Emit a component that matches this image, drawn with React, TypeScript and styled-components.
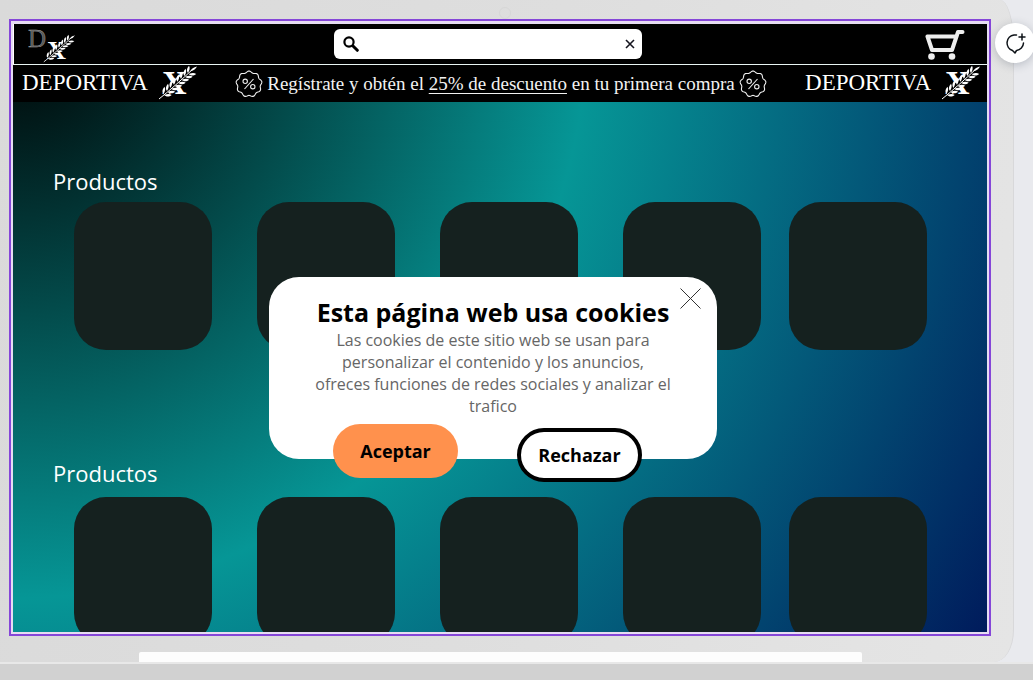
import React from "react";
import styled, { createGlobalStyle } from "styled-components";

const GlobalStyle = createGlobalStyle`
  * { box-sizing: border-box; }
  body {
    margin: 0;
    background: #e9eaee;
    font-family: "Open Sans", "Noto Sans", sans-serif;
  }
`;

const Page = styled.div`
  position: relative;
  display: flex;
  flex-direction: column;
  height: 100vh;
  min-height: 520px;
  overflow: hidden;
`;

const Lid = styled.div`
  position: relative;
  flex: 1;
  min-height: 0;
  display: flex;
  flex-direction: column;
  margin-right: 19px;
  padding: 19px 22px 0 9px;
  border-right: 1px solid #d8d8da;
  border-radius: 0 14px 20px 0 / 0 44px 32px 0;
  background: linear-gradient(100deg, #dadada, #dedede 50%, #e5e5e5);
`;

const Camera = styled.span`
  position: absolute;
  top: 7px;
  left: 50%;
  width: 12px;
  height: 12px;
  margin-left: -8px;
  border: 1px solid #d7d7d7;
  border-radius: 50%;
`;

const Base = styled.div`
  height: 18px;
  flex: none;
  border-top: 2px solid #e8e8e8;
  background: #d1d1d1;
`;

const Notch = styled.div`
  flex: none;
  height: 10px;
  margin: 16px 129px 0 130px;
  border-radius: 2px 2px 0 0;
  background: #fdfdfd;
`;

const Selection = styled.div`
  position: relative;
  flex: 1;
  min-height: 0;
  display: flex;
  padding: 3px 2px 2px;
  border: 2px solid #8546d8;
  background: #e6dcf2;
`;

const Screen = styled.main`
  position: relative;
  flex: 1;
  min-width: 0;
  display: flex;
  flex-direction: column;
  overflow: hidden;
  background: radial-gradient(circle at 0 0, #000 0%, #069696 50%, #001b5c 100%);
`;

const TopBar = styled.header`
  flex: none;
  display: grid;
  grid-template-columns: 1fr 308px 1fr;
  align-items: center;
  height: 41px;
  padding: 0 22px 0 14px;
  border-left: 1px solid #fff;
  border-bottom: 1px solid #e8f4f2;
  background: #000;
`;

const Brand = styled.a`
  display: block;
  height: 40px;
  svg { display: block; }
`;

const SearchBox = styled.div`
  display: flex;
  align-items: center;
  height: 30px;
  margin: 0 9px 0 -9px;
  padding: 0 6px 0 9px;
  border-radius: 6px;
  background: #fff;
`;

const SearchInput = styled.input`
  flex: 1;
  min-width: 0;
  height: 28px;
  padding: 0 8px;
  border: 0;
  outline: 0;
  background: transparent;
  font: 14px "Open Sans", sans-serif;
`;

const IconButton = styled.button`
  display: flex;
  align-items: center;
  justify-content: center;
  padding: 0;
  border: 0;
  background: transparent;
  color: #000;
  cursor: pointer;
`;

const CartButton = styled(IconButton)`
  justify-self: end;
`;

const PromoBar = styled.div`
  flex: none;
  display: flex;
  align-items: center;
  justify-content: space-between;
  height: 37px;
  padding: 0 7px 0 9px;
  background: #000;
  color: #fff;
  font-family: "Liberation Serif", serif;
`;

const Wordmark = styled.div`
  display: flex;
  align-items: center;
  gap: 10px;
  padding-bottom: 2px;
  font-size: 23px;
  line-height: 32px;
  svg { display: block; overflow: visible; }
`;

const Promo = styled.p`
  display: flex;
  align-items: center;
  gap: 4px;
  margin: 0;
  font-size: 19px;
  line-height: 24px;
  white-space: nowrap;
  color: #f2f2f2;
  a { color: inherit; text-underline-offset: 3px; text-decoration-thickness: 1px; }
`;

const Shelf = styled.section`
  flex: none;
  padding: 0 60px 0 61px;
`;

const Catalog = styled.div`
  flex: 1;
  min-height: 0;
  display: flex;
  flex-direction: column;
  gap: 107px;
  padding-top: 63px;
`;

const ShelfTitle = styled.h2<{ $gap: number }>`
  margin: 0 0 ${(p) => p.$gap}px -21px;
  font-size: 22px;
  font-weight: 400;
  line-height: 32px;
  color: #fff;
`;

const Cards = styled.div`
  display: flex;
  gap: 45px;
`;

const Card = styled.article`
  flex: 1;
  height: 148px;
  border-radius: 32px;
  background: #15211f;
  &:last-child { margin-left: -17px; }
`;

const Overlay = styled.div`
  position: absolute;
  inset: 0;
  display: flex;
  justify-content: center;
  align-items: flex-start;
  padding: 253px 14px 0 0;
`;

const Dialog = styled.section`
  position: relative;
  width: 448px;
  height: 182px;
  padding: 19px 44px 0;
  border-radius: 30px;
  background: #fff;
  text-align: center;
`;

const CloseButton = styled(IconButton)`
  position: absolute;
  top: 11px;
  right: 16px;
`;

const DialogTitle = styled.h1`
  margin: 0;
  font-size: 25px;
  line-height: 33px;
  white-space: nowrap;
  color: #000;
`;

const DialogText = styled.p`
  margin: 0 0 7px;
  font-size: 16px;
  line-height: 22px;
  color: #666;
`;

const Actions = styled.div`
  display: flex;
  align-items: flex-start;
  gap: 59px;
  margin-left: 20px;
`;

const Choice = styled.button<{ $outlined?: boolean }>`
  flex: none;
  width: 125px;
  height: 54px;
  margin-top: ${(p) => (p.$outlined ? 4 : 0)}px;
  padding: 0;
  border: ${(p) => (p.$outlined ? "4px solid #000" : "0")};
  border-radius: 27px;
  background: ${(p) => (p.$outlined ? "#fff" : "#ff914d")};
  color: #000;
  font: 700 18px "Open Sans", "Noto Sans", sans-serif;
  cursor: pointer;
`;

const CommentButton = styled(IconButton)`
  position: absolute;
  top: 23px;
  right: -2px;
  width: 40px;
  height: 40px;
  border-radius: 50%;
  background: #fff;
  box-shadow: 0 2px 10px rgba(40, 50, 70, 0.25);
`;

const LEAVES = [0.14, 0.24, 0.34, 0.44, 0.54, 0.64, 0.74, 0.84];

function Laurel() {
  return (
    <g>
      <path d="M6 29Q17 20 33 6" fill="none" stroke="#000" strokeWidth="6" />
      <path d="M1 34Q16 22 36 3" fill="none" stroke="#fff" strokeWidth="1" />
      {LEAVES.map((t) => {
        const x = 1 + 35 * t;
        const y = 34 - 30 * t - 2 * t * (1 - t);
        return (
          <g key={t} transform={`translate(${x} ${y}) rotate(-41)`} fill="#fff">
            <path d="M0-0.6C0-3 2-5.2 5.6-5.4C5-3 3-1.6 0-0.6Z" />
            <path d="M0 0.6C0 3 2 5.2 5.6 5.4C5 3 3 1.6 0 0.6Z" />
          </g>
        );
      })}
      <path d="M32 6.5Q34 2.5 39 1.5Q37 5.5 32 6.5Z" fill="#fff" />
    </g>
  );
}

function LaurelX() {
  return (
    <svg width="39" height="36" viewBox="0 0 39 36" aria-label="X">
      <text x="4" y="29" fontFamily="Liberation Serif, serif" fontWeight="700" fontSize="34" fill="#fff">X</text>
      <Laurel />
    </svg>
  );
}

function Monogram() {
  return (
    <svg width="48" height="40" viewBox="0 0 48 40" aria-label="DX">
      <text x="0" y="23" fontFamily="Liberation Serif, serif" fontSize="25" fill="#555" stroke="#aaa" strokeWidth="0.4">D</text>
      <g transform="translate(15 10) scale(0.82)">
        <text x="5" y="31" fontFamily="Liberation Serif, serif" fontWeight="700" fontSize="32" fill="#fff">X</text>
        <Laurel />
      </g>
    </svg>
  );
}

const SEAL =
  Array.from({ length: 121 }, (_, i) => {
    const a = (i / 120) * Math.PI * 2;
    const r = 12.2 + 0.8 * Math.cos(9 * a);
    return `${i ? "L" : "M"}${(14 + r * Math.sin(a)).toFixed(2)} ${(14 - r * Math.cos(a)).toFixed(2)}`;
  }).join("") + "Z";

function Seal() {
  return (
    <svg width="28" height="28" viewBox="0 0 28 28" fill="none" stroke="#eee" strokeWidth="1.1">
      <path d={SEAL} />
      <circle cx="10.2" cy="11.3" r="2.2" />
      <circle cx="17.8" cy="16.7" r="2.2" />
      <path d="M18.5 9L9.5 19" />
    </svg>
  );
}

function DeportivaMark() {
  return (
    <Wordmark>
      <span>DEPORTIVA</span>
      <LaurelX />
    </Wordmark>
  );
}

function ProductShelf({ gap }: { gap: number }) {
  return (
    <Shelf>
      <ShelfTitle $gap={gap}>Productos</ShelfTitle>
      <Cards>
        {[1, 2, 3, 4, 5].map((n) => (
          <Card key={n} />
        ))}
      </Cards>
    </Shelf>
  );
}

export default function App() {
  return (
    <Page>
      <GlobalStyle />
      <Lid>
        <Camera />
        <Selection>
          <Screen>
            <TopBar>
              <Brand href="#" aria-label="Deportiva X">
                <Monogram />
              </Brand>
              <SearchBox>
                <svg width="16" height="16" viewBox="0 0 16 16" fill="none" stroke="#000" strokeLinecap="round">
                  <circle cx="6" cy="6" r="4.6" strokeWidth="2.2" />
                  <path d="M10 10L14.3 14.3" strokeWidth="3" />
                </svg>
                <SearchInput type="text" aria-label="Buscar" />
                <IconButton aria-label="Borrar">
                  <svg width="12" height="12" viewBox="0 0 12 12" stroke="#15151f" strokeWidth="1.6">
                    <path d="M2 2L10 10M10 2L2 10" />
                  </svg>
                </IconButton>
              </SearchBox>
              <CartButton aria-label="Carrito">
                <svg width="40" height="31" viewBox="0 0 40 31" fill="none" stroke="#eee" strokeWidth="4" strokeLinejoin="round" strokeLinecap="round">
                  <path d="M37.5 3H33L27 21H7L2.5 7.5H31" />
                  <circle cx="6.5" cy="27.5" r="3.3" fill="#eee" stroke="none" />
                  <circle cx="27" cy="27.5" r="3.3" fill="#eee" stroke="none" />
                </svg>
              </CartButton>
            </TopBar>
            <PromoBar>
              <DeportivaMark />
              <Promo>
                <Seal />
                <span>
                  Regístrate y obtén el <a href="#">25% de descuento</a> en tu primera compra
                </span>
                <Seal />
              </Promo>
              <DeportivaMark />
            </PromoBar>
            <Catalog>
              <ProductShelf gap={5} />
              <ProductShelf gap={8} />
            </Catalog>
            <Overlay>
              <Dialog role="dialog" aria-labelledby="cookies-title">
                <CloseButton aria-label="Cerrar">
                  <svg width="21" height="21" viewBox="0 0 21 21" stroke="#333" strokeWidth="1">
                    <path d="M0.5 0.5L20.5 20.5M20.5 0.5L0.5 20.5" />
                  </svg>
                </CloseButton>
                <DialogTitle id="cookies-title">Esta página web usa cookies</DialogTitle>
                <DialogText>
                  Las cookies de este sitio web se usan para personalizar el contenido y los anuncios, ofreces
                  funciones de redes sociales y analizar el trafico
                </DialogText>
                <Actions>
                  <Choice>Aceptar</Choice>
                  <Choice $outlined>Rechazar</Choice>
                </Actions>
              </Dialog>
            </Overlay>
          </Screen>
        </Selection>
        <Notch />
      </Lid>
      <Base />
      <CommentButton aria-label="Comentar">
        <svg width="24" height="24" viewBox="0 0 24 24" fill="none" stroke="#0e1318" strokeWidth="1.5" strokeLinecap="round" strokeLinejoin="round">
          <path d="M13.5 4H11A8 8 0 0 0 9.5 19.5L12 22L13.5 19.5A8 8 0 0 0 20.5 12M19 3V9M16 6H22" />
        </svg>
      </CommentButton>
    </Page>
  );
}
